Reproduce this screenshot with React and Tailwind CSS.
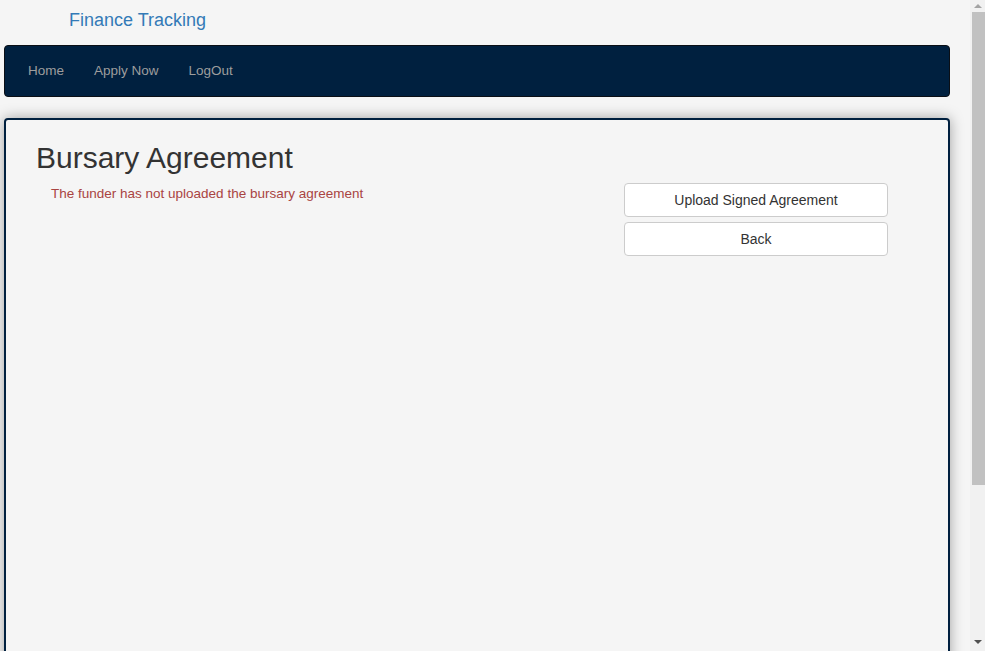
export default function App() {
  return (
    <div className="min-h-[863px] bg-[#f5f5f5] pb-[12px]" style={{ fontFamily: '"Liberation Sans", Arial, sans-serif' }}>
      <div className="h-[45px] flex items-center pl-[69px] pb-[5px]">
        <span className="text-[18px] text-[#337ab7] leading-none">Finance Tracking</span>
      </div>
      <nav className="mx-[4px] w-[946px] h-[52px] bg-[#00203f] border border-[#0a0f16] rounded-[4px] flex items-center pl-[8px]">
        <a className="px-[15px] text-[13.5px] text-[#9d9d9d]">Home</a>
        <a className="px-[15px] text-[13.5px] text-[#9d9d9d]">Apply Now</a>
        <a className="px-[15px] text-[13.5px] text-[#9d9d9d]">LogOut</a>
      </nav>
      <div className="mt-[21px] mx-[4px] w-[946px] h-[733px] border-2 border-[#00203f] rounded-[4px] bg-[#f5f5f5] shadow-[0_0_14px_rgba(0,0,0,0.35)] px-[30px]">
        <h2 className="text-[30px] text-[#333] leading-[33px] mt-[21px] mb-[10px]">Bursary Agreement</h2>
        <div className="flex">
          <div className="pl-[15px] w-[588px]">
            <p className="text-[13.5px] text-[#a94442] leading-[20px]">The funder has not uploaded the bursary agreement</p>
          </div>
          <div className="w-[264px] flex flex-col gap-[5px] -mt-[1px]">
            <button className="h-[34px] w-full bg-white border border-[#ccc] rounded-[4px] text-[14px] text-[#333]">Upload Signed Agreement</button>
            <button className="h-[34px] w-full bg-white border border-[#ccc] rounded-[4px] text-[14px] text-[#333]">Back</button>
          </div>
        </div>
      </div>
      <div className="fixed top-0 right-0 w-[15px] h-screen bg-[#f1f1f1] flex flex-col items-end">
        <div className="h-[12px] w-full flex items-center justify-center pl-[1px]">
          <div className="w-0 h-0 border-l-[4px] border-r-[4px] border-b-[4px] border-l-transparent border-r-transparent border-b-[#a3a3a3]"></div>
        </div>
        <div className="w-[13px] h-[473px] bg-[#c1c1c1]"></div>
        <div className="flex-1"></div>
        <div className="h-[14px] w-full flex items-start justify-center pl-[1px] pt-[3px]">
          <div className="w-0 h-0 border-l-[4px] border-r-[4px] border-t-[4px] border-l-transparent border-r-transparent border-t-[#505050]"></div>
        </div>
      </div>
    </div>
  );
}
